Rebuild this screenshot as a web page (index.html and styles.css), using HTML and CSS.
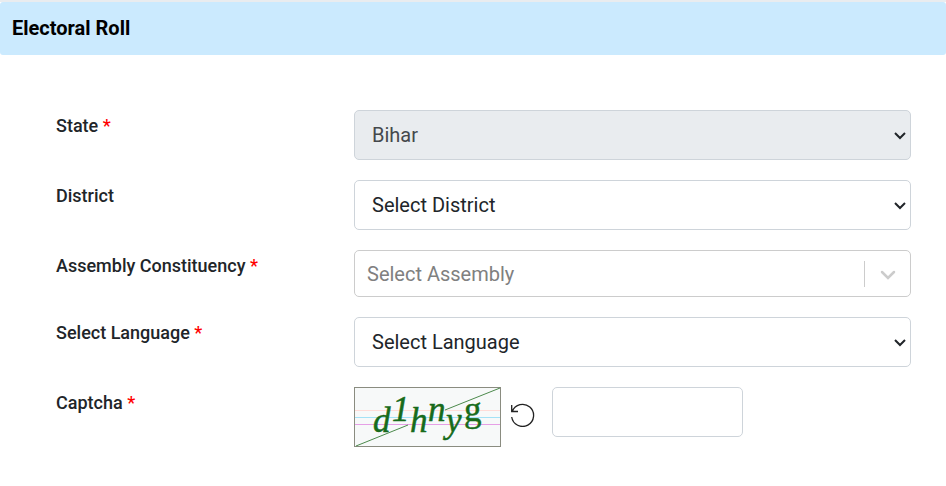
FILE: index.html
```html
<!DOCTYPE html>
<html lang="en">
<head>
  <meta charset="UTF-8">
  <meta name="viewport" content="width=device-width, initial-scale=1">
  <title>Electoral Roll</title>
  <link rel="stylesheet" href="styles.css">
</head>
<body>
  <header class="card-header">
    <h1>Electoral Roll</h1>
  </header>

  <form class="roll-form">
    <div class="form-row">
      <label for="state">State <span class="required">*</span></label>
      <select id="state" class="form-select" disabled>
        <option>Bihar</option>
      </select>
    </div>

    <div class="form-row">
      <label for="district">District</label>
      <select id="district" class="form-select">
        <option>Select District</option>
      </select>
    </div>

    <div class="form-row">
      <label for="assembly">Assembly Constituency <span class="required">*</span></label>
      <select id="assembly" class="form-select assembly">
        <option>Select Assembly</option>
      </select>
    </div>

    <div class="form-row">
      <label for="language">Select Language <span class="required">*</span></label>
      <select id="language" class="form-select">
        <option>Select Language</option>
      </select>
    </div>

    <div class="form-row">
      <label for="captcha">Captcha <span class="required">*</span></label>
      <div class="captcha">
        <svg class="captcha-image" width="147" height="60" viewBox="0 0 147 60">
          <rect x="0.5" y="0.5" width="146" height="59" fill="#f7f9f9" stroke="#8a8c80"/>
          <path d="M1 23.500H146" stroke="#ffdcd8"/>
          <path d="M1 30.500H146" stroke="#a4e2f6"/>
          <path d="M1 37.500H146" stroke="#e6a0e6"/>
          <path d="M2 59L54 38M91 23L146 1" stroke="#4c8a4c"/>
          <g class="captcha-text">
            <text x="19" y="45">d</text>
            <text x="38" y="34">1</text>
            <text x="56" y="45">h</text>
            <text x="74" y="34">n</text>
            <text x="92" y="45">y</text>
            <text x="110" y="34" class="upright">g</text>
          </g>
        </svg>
        <button type="button" class="refresh" aria-label="Refresh captcha">
          <svg width="24" height="24" viewBox="0 0 24 24" fill="none" stroke="#222" stroke-width="1.300">
            <path d="M0.700 2V8.500H7M1.300 8.500A11 11 0 1 1 0.700 14"/>
          </svg>
        </button>
        <input id="captcha" type="text" class="captcha-input">
      </div>
    </div>
  </form>
</body>
</html>
```

FILE: styles.css
```css
* {
  box-sizing: border-box;
}

body {
  margin: 0;
  background: #fff;
  color: #212529;
  font-family: Roboto, "Liberation Sans", sans-serif;
  border-top: 2px solid #e9ecef;
}

.card-header {
  background: #cbeafe;
  border-radius: 3px;
  padding: 12px;
}

.card-header h1 {
  margin: 0;
  color: #000;
  font-size: 20px;
  line-height: 29px;
  font-weight: 700;
}

.roll-form {
  display: flex;
  flex-direction: column;
  gap: 20px;
  padding: 55px 35px 39px 56px;
}

.form-row {
  display: grid;
  grid-template-columns: 298px 1fr;
  align-items: start;
}

label {
  font-size: 18px;
  line-height: 32px;
  font-weight: 500;
}

.required {
  color: #f00;
}

.form-select {
  appearance: none;
  width: 100%;
  height: 50px;
  padding: 0 36px 0 17px;
  border: 1px solid #ced4da;
  border-radius: 5px;
  background: #fff url("data:image/svg+xml,%3Csvg xmlns='http://www.w3.org/2000/svg' width='12' height='8' fill='none' stroke='%23212529' stroke-width='2'%3E%3Cpath d='M1 1l5 5 5-5'/%3E%3C/svg%3E") no-repeat right 4px top 21px;
  color: #212529;
  font-family: inherit;
  font-size: 20px;
}

.form-select:disabled {
  background-color: #e9ecef;
  color: #45484c;
  opacity: 1;
}

.form-select.assembly {
  height: 47px;
  padding-left: 12px;
  border-color: #ccc;
  background-image: url("data:image/svg+xml,%3Csvg xmlns='http://www.w3.org/2000/svg' width='32' height='26' fill='none' stroke='%23ccc'%3E%3Cpath d='M.5 0v26'/%3E%3Cpath d='M18 11l6 6 6-6' stroke-width='2.500' stroke-linecap='round'/%3E%3C/svg%3E");
  background-position: right 14px center;
  color: #808080;
}

.captcha {
  display: flex;
  align-items: flex-start;
}

.captcha-image {
  display: block;
}

.captcha-text {
  fill: #176b1b;
  stroke: #176b1b;
  stroke-width: 0.5;
  font-family: "Liberation Serif", serif;
  font-size: 35px;
  font-style: italic;
}

.captcha-text .upright {
  font-style: normal;
}

.refresh {
  display: flex;
  margin: 16px 17px 0 10px;
  padding: 0;
  border: 0;
  background: none;
  cursor: pointer;
}

.captcha-input {
  width: 191px;
  height: 50px;
  padding: 0 16px;
  border: 1px solid #ced4da;
  border-radius: 5px;
  font-family: inherit;
  font-size: 20px;
}
```
